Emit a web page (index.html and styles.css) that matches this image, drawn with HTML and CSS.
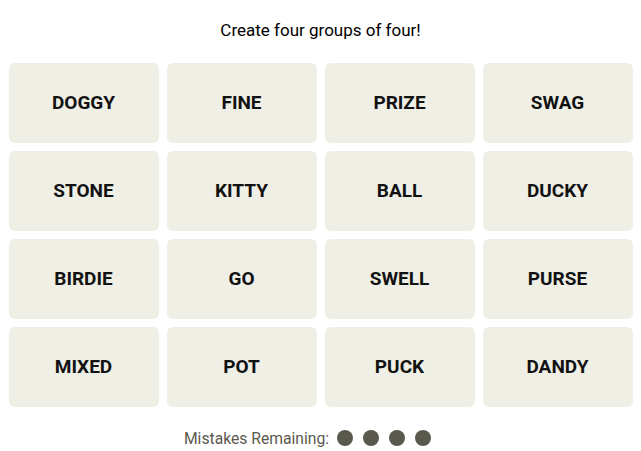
FILE: index.html
```html
<!DOCTYPE html>
<html>
<head>
<meta charset="utf-8">
<link rel="stylesheet" href="styles.css">
</head>
<body>
<main class="game">
  <h2 class="prompt">Create four groups of four!</h2>
  <div class="board">
    <div class="tile">DOGGY</div>
    <div class="tile">FINE</div>
    <div class="tile">PRIZE</div>
    <div class="tile">SWAG</div>
    <div class="tile">STONE</div>
    <div class="tile">KITTY</div>
    <div class="tile">BALL</div>
    <div class="tile">DUCKY</div>
    <div class="tile">BIRDIE</div>
    <div class="tile">GO</div>
    <div class="tile">SWELL</div>
    <div class="tile">PURSE</div>
    <div class="tile">MIXED</div>
    <div class="tile">POT</div>
    <div class="tile">PUCK</div>
    <div class="tile">DANDY</div>
  </div>
  <div class="mistakes">
    <span class="mistakes-label">Mistakes Remaining:</span>
    <span class="dots"><span class="dot"></span><span class="dot"></span><span class="dot"></span><span class="dot"></span></span>
  </div>
</main>
</body>
</html>
```
FILE: styles.css
```css
html, body {
  margin: 0;
  padding: 0;
  background: #fff;
}
body {
  font-family: Roboto, "Liberation Sans", sans-serif;
  color: #000;
}
.game {
  width: 624px;
  margin: 0 auto;
  padding-top: 19px;
}
.prompt {
  margin: 0;
  font-size: 17px;
  font-weight: 400;
  line-height: 23px;
  text-align: center;
  color: #000;
}
.board {
  margin-top: 21px;
  display: grid;
  grid-template-columns: repeat(4, 150px);
  grid-auto-rows: 80px;
  gap: 8px;
}
.tile {
  background: #efefe6;
  border-radius: 6px;
  display: flex;
  align-items: center;
  justify-content: center;
  padding-bottom: 2px;
  box-sizing: border-box;
  font-weight: 700;
  font-size: 19px;
  color: #121212;
}
.mistakes {
  margin-top: 22px;
  padding-right: 26px;
  display: flex;
  justify-content: center;
  align-items: center;
  gap: 8px;
  height: 18px;
}
.mistakes-label {
  font-size: 15.7px;
  color: #5a594e;
}
.dots {
  display: flex;
  gap: 10px;
}
.dot {
  width: 16px;
  height: 16px;
  border-radius: 50%;
  background: #5a594e;
}
```
